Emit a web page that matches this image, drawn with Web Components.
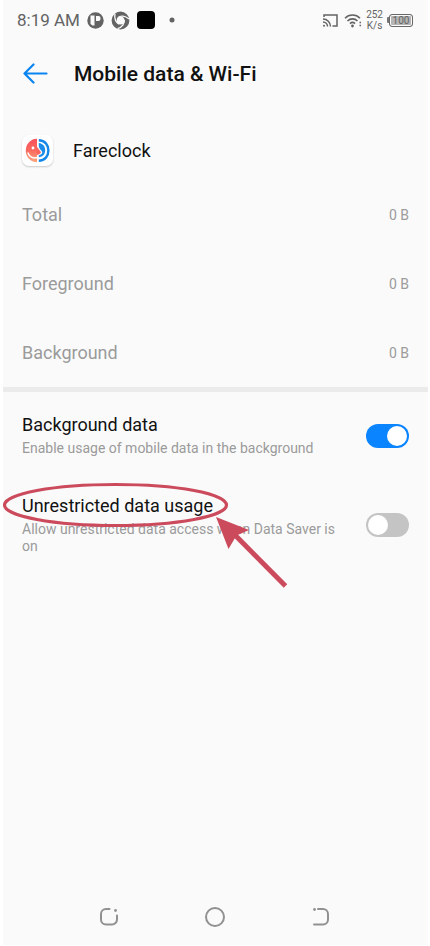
<!DOCTYPE html>
<html lang="en">
<head>
<meta charset="utf-8">
<meta name="viewport" content="width=device-width, initial-scale=1">
<title>Mobile data &amp; Wi-Fi</title>
<style>
  body {
    background: #fff;
    font-family: Roboto, "Noto Sans", sans-serif;
    margin: 0;
  }
</style>
</head>
<body>
<data-screen>
  <status-bar slot="status" time="8:19 AM" rate="252" unit="K/s" battery="100"></status-bar>
  <page-header slot="header">Mobile data &amp; Wi-Fi</page-header>
  <app-title>Fareclock</app-title>
  <usage-row value="0 B">Total</usage-row>
  <usage-row value="0 B">Foreground</usage-row>
  <usage-row value="0 B">Background</usage-row>
  <section-divider></section-divider>
  <switch-row label="Background data" checked>Enable usage of mobile data in the background</switch-row>
  <switch-row label="Unrestricted data usage">Allow unrestricted data access when Data Saver is on<callout-mark slot="overlay"></callout-mark></switch-row>
  <nav-bar slot="nav"></nav-bar>
</data-screen>

<script>
class BaseElement extends HTMLElement {
  constructor() {
    super();
    const template = document.createElement('template');
    template.innerHTML = this.constructor.template;
    this.root = this.attachShadow({ mode: 'open' });
    this.root.appendChild(template.content.cloneNode(true));
  }

  // Copies an attribute of the host into the element with the same id.
  fill(name) {
    this.root.getElementById(name).textContent = this.getAttribute(name);
  }
}

class DataScreen extends BaseElement {
  static get template() {
    return `
      <style>
        :host {
          background: #fafafa;
          box-sizing: border-box;
          display: flex;
          flex-direction: column;
          margin: 0 2px 0 3px;
          min-height: calc(100vh - 1px);
        }

        main {
          flex: 1;
        }
      </style>
      <slot name="status"></slot>
      <slot name="header"></slot>
      <main><slot></slot></main>
      <slot name="nav"></slot>
    `;
  }
}
customElements.define('data-screen', DataScreen);

class StatusBar extends BaseElement {
  static get template() {
    return `
      <style>
        :host {
          align-items: center;
          color: #636363;
          display: flex;
          height: 40px;
          justify-content: space-between;
          padding: 0 15px 0 14px;
        }

        div {
          align-items: center;
          display: flex;
        }

        svg {
          display: block;
        }

        .left {
          gap: 7px;
        }

        .right {
          gap: 4px;
        }

        #time {
          font-size: 17px;
        }

        .speed {
          flex-direction: column;
          font-size: 10px;
          line-height: 11px;
        }

        .battery::before {
          background: #777;
          border-radius: 1px 0 0 1px;
          content: '';
          height: 6px;
          width: 2px;
        }

        #battery {
          background: #b5b5b5;
          border: 1px solid #686868;
          border-radius: 3px;
          box-shadow: inset 0 0 0 1px #fafafa;
          font-size: 10px;
          line-height: 11px;
          text-align: center;
          width: 22px;
        }
      </style>
      <div class="left">
        <span id="time"></span>
        <svg width="17" height="17" viewBox="0 0 17 17">
          <circle cx="8.5" cy="8.5" r="8.2" fill="#636363"/>
          <path d="M3.5 3.5h4v10H5.500L3.500 12zM9 4h2.500a2 2 0 0 1 2 2v1a2 2 0 0 1-2 2H9z" fill="#fafafa"/>
        </svg>
        <svg width="19" height="19" viewBox="0 0 19 19">
          <circle cx="9.5" cy="9.5" r="6.4" fill="none" stroke="#636363" stroke-width="5"/>
          <g fill="none" stroke="#fafafa" stroke-width="1.3">
            <path d="M7 6.500C9.500 4.500 14 4.500 18 8"/>
            <path d="M7 6.500C9.500 4.500 14 4.500 18 8" transform="rotate(120 9.5 9.5)"/>
            <path d="M7 6.500C9.500 4.500 14 4.500 18 8" transform="rotate(240 9.5 9.5)"/>
          </g>
        </svg>
        <svg width="18" height="18" viewBox="0 0 18 18"><rect width="18" height="18" rx="4"/></svg>
        <svg width="18" height="18" viewBox="0 0 18 18"><circle cx="10" cy="9" r="2.5" fill="#636363"/></svg>
      </div>
      <div class="right">
        <svg width="17" height="13" viewBox="0 0 17 13" fill="none" stroke="#636363" stroke-width="1.5">
          <path d="M1 3V1h13v11H9.500M0 5a7.500 7.500 0 0 1 7.500 7.500M0 8a4.500 4.500 0 0 1 4.500 4.500"/>
          <circle cx="1" cy="11.7" r="1" fill="#636363" stroke="none"/>
        </svg>
        <svg width="18" height="15" viewBox="0 0 18 15" fill="none" stroke="#636363" stroke-width="1.6">
          <path d="M1 5.200a10.500 10.500 0 0 1 15 0M3.500 8a7 7 0 0 1 10 0M6 10.600a3.600 3.600 0 0 1 5 0"/>
          <circle cx="8.5" cy="13" r="1.4" fill="#636363" stroke="none"/>
          <path d="M15.500 9.500h1.500M15.500 12.500h1.500" stroke-width="1.3"/>
        </svg>
        <div class="speed"><span id="rate"></span><span id="unit"></span></div>
        <div class="battery"><span id="battery"></span></div>
      </div>
    `;
  }

  connectedCallback() {
    ['time', 'rate', 'unit', 'battery'].forEach((name) => this.fill(name));
  }
}
customElements.define('status-bar', StatusBar);

class PageHeader extends BaseElement {
  static get template() {
    return `
      <style>
        :host {
          align-items: center;
          color: #111;
          display: flex;
          gap: 25px;
          height: 68px;
          padding: 0 19px;
        }

        button {
          background: none;
          border: 0;
          cursor: pointer;
          margin: 0;
          padding: 0 0 0 1px;
        }

        svg {
          display: block;
        }

        h1 {
          font-size: 21px;
          font-weight: 500;
          line-height: 28px;
          margin: 0;
        }
      </style>
      <button type="button" aria-label="Back">
        <svg width="26" height="22" viewBox="0 0 26 22" fill="none" stroke="#0a84f0" stroke-width="2.2" stroke-linecap="round" stroke-linejoin="round">
          <path d="M10.500 1.500L1.500 10.500L10.500 19.500M1.500 10.500H23.500"/>
        </svg>
      </button>
      <h1><slot></slot></h1>
    `;
  }
}
customElements.define('page-header', PageHeader);

class AppTitle extends BaseElement {
  static get template() {
    return `
      <style>
        :host {
          align-items: center;
          box-sizing: border-box;
          color: #111;
          display: flex;
          font-size: 18px;
          gap: 20px;
          height: 72px;
          padding: 12px 19px 0;
        }

        .icon {
          background: #fff;
          border-radius: 7px;
          box-shadow: 0 1px 2px rgba(0, 0, 0, 0.2);
          height: 31px;
          width: 31px;
        }

        svg {
          display: block;
        }
      </style>
      <span class="icon">
        <svg width="31" height="31" viewBox="0 0 31 31">
          <defs>
            <linearGradient id="warm" x1="0" y1="0" x2="0" y2="1">
              <stop offset="0" stop-color="#f9505a"/>
              <stop offset="0.5" stop-color="#f96a5e"/>
              <stop offset="1" stop-color="#fba77d"/>
            </linearGradient>
          </defs>
          <path d="M15 3.800C8 4 3.800 9.500 3.800 15.500S8 27 15 27.200z" fill="url(#warm)"/>
          <path d="M5.800 17.500C7 21.500 11 24 15.500 22.500" fill="none" stroke="#fff" stroke-width="1.5"/>
          <circle cx="11" cy="13" r="1.4" fill="#fff"/>
          <path d="M15 11.500V20C17.500 19.500 18.800 18.500 19 17.300C18 15.500 16.500 14 15 11.500z" fill="#f9645e"/>
          <path d="M16.800 5.200C23 5.500 26.400 10 26.400 15.500S23 25.500 16.800 25.800" fill="none" stroke="#1487e8" stroke-width="2.4"/>
          <path d="M16.800 8C21.500 8.500 23.200 12 23.200 15C23.200 19.500 20.500 22 16.800 22.200V20.300C19 20 20.500 18.500 20.300 17C19 15 17 13.500 16.800 11z" fill="#1b8cea"/>
        </svg>
      </span>
      <slot></slot>
    `;
  }
}
customElements.define('app-title', AppTitle);

class UsageRow extends BaseElement {
  static get template() {
    return `
      <style>
        :host {
          align-items: center;
          color: #9b9b9b;
          display: flex;
          font-size: 18px;
          height: 69px;
          justify-content: space-between;
          padding: 0 19px;
        }

        #value {
          font-size: 14px;
        }
      </style>
      <span><slot></slot></span>
      <span id="value"></span>
    `;
  }

  connectedCallback() {
    this.fill('value');
  }
}
customElements.define('usage-row', UsageRow);

class SectionDivider extends BaseElement {
  static get template() {
    return `
      <style>
        :host {
          background: #ebebeb;
          display: block;
          height: 5px;
        }
      </style>
    `;
  }
}
customElements.define('section-divider', SectionDivider);

class SwitchRow extends BaseElement {
  static get template() {
    return `
      <style>
        :host {
          align-items: center;
          display: flex;
          gap: 24px;
          justify-content: space-between;
          padding: 22px 19px 16px;
          position: relative;
        }

        label {
          color: #111;
          display: block;
          font-size: 18px;
          line-height: 22px;
        }

        p {
          color: #9b9b9b;
          font-size: 14px;
          line-height: 17px;
          margin: 4px 0 0;
        }

        input {
          appearance: none;
          background: #c4c4c4;
          border-radius: 12px;
          box-sizing: border-box;
          cursor: pointer;
          display: flex;
          flex: none;
          height: 24px;
          margin: 0;
          padding: 2px;
          width: 43px;
        }

        input::before {
          background: #fff;
          border-radius: 50%;
          content: '';
          height: 20px;
          width: 20px;
        }

        input:checked {
          background: #0a84ff;
          justify-content: flex-end;
        }
      </style>
      <div>
        <label id="label" for="toggle"></label>
        <p id="hint"><slot></slot></p>
      </div>
      <input id="toggle" type="checkbox" role="switch" aria-describedby="hint">
      <slot name="overlay"></slot>
    `;
  }

  connectedCallback() {
    this.fill('label');
    this.root.getElementById('toggle').checked = this.hasAttribute('checked');
  }
}
customElements.define('switch-row', SwitchRow);

// Ellipse round the label and an arrow that points at it.
class CalloutMark extends BaseElement {
  static get template() {
    return `
      <style>
        :host {
          left: 0;
          pointer-events: none;
          position: absolute;
          top: 8px;
        }

        svg {
          display: block;
        }
      </style>
      <svg width="290" height="110" viewBox="0 0 290 110">
        <ellipse cx="112.5" cy="24" rx="111" ry="20.5" fill="none" stroke="#cb4a5c" stroke-width="3.2"/>
        <path d="M282.500 105L228 50" fill="none" stroke="#cb4a5c" stroke-width="5"/>
        <path d="M213 36L246 49L233.500 54.500L225.500 68z" fill="#cb4a5c"/>
      </svg>
    `;
  }
}
customElements.define('callout-mark', CalloutMark);

class NavBar extends BaseElement {
  static get template() {
    return `
      <style>
        :host {
          display: flex;
          gap: 80px;
          height: 56px;
          justify-content: center;
          padding-right: 2px;
        }

        button {
          align-items: center;
          background: none;
          border: 0;
          cursor: pointer;
          display: flex;
          padding: 0;
        }
      </style>
      <button type="button" aria-label="Recent apps">
        <svg width="26" height="22" viewBox="0 0 26 22" fill="none" stroke="#919191" stroke-width="2" stroke-linecap="round">
          <path d="M13.500 3H10a5 5 0 0 0-5 5v5.500a5 5 0 0 0 5 5h6a5 5 0 0 0 5-5V9.500"/>
          <circle cx="19.5" cy="4.5" r="1.4" fill="#919191" stroke="none"/>
        </svg>
      </button>
      <button type="button" aria-label="Home">
        <svg width="26" height="22" viewBox="0 0 26 22" fill="none" stroke="#919191" stroke-width="2">
          <circle cx="13" cy="11" r="9"/>
        </svg>
      </button>
      <button type="button" aria-label="Back">
        <svg width="26" height="22" viewBox="0 0 26 22" fill="none" stroke="#919191" stroke-width="2" stroke-linecap="round">
          <path d="M10 3h5a5 5 0 0 1 5 5v5.500a5 5 0 0 1-5 5H6"/>
          <circle cx="6.5" cy="3.5" r="1.4" fill="#919191" stroke="none"/>
        </svg>
      </button>
    `;
  }
}
customElements.define('nav-bar', NavBar);
</script>
</body>
</html>
